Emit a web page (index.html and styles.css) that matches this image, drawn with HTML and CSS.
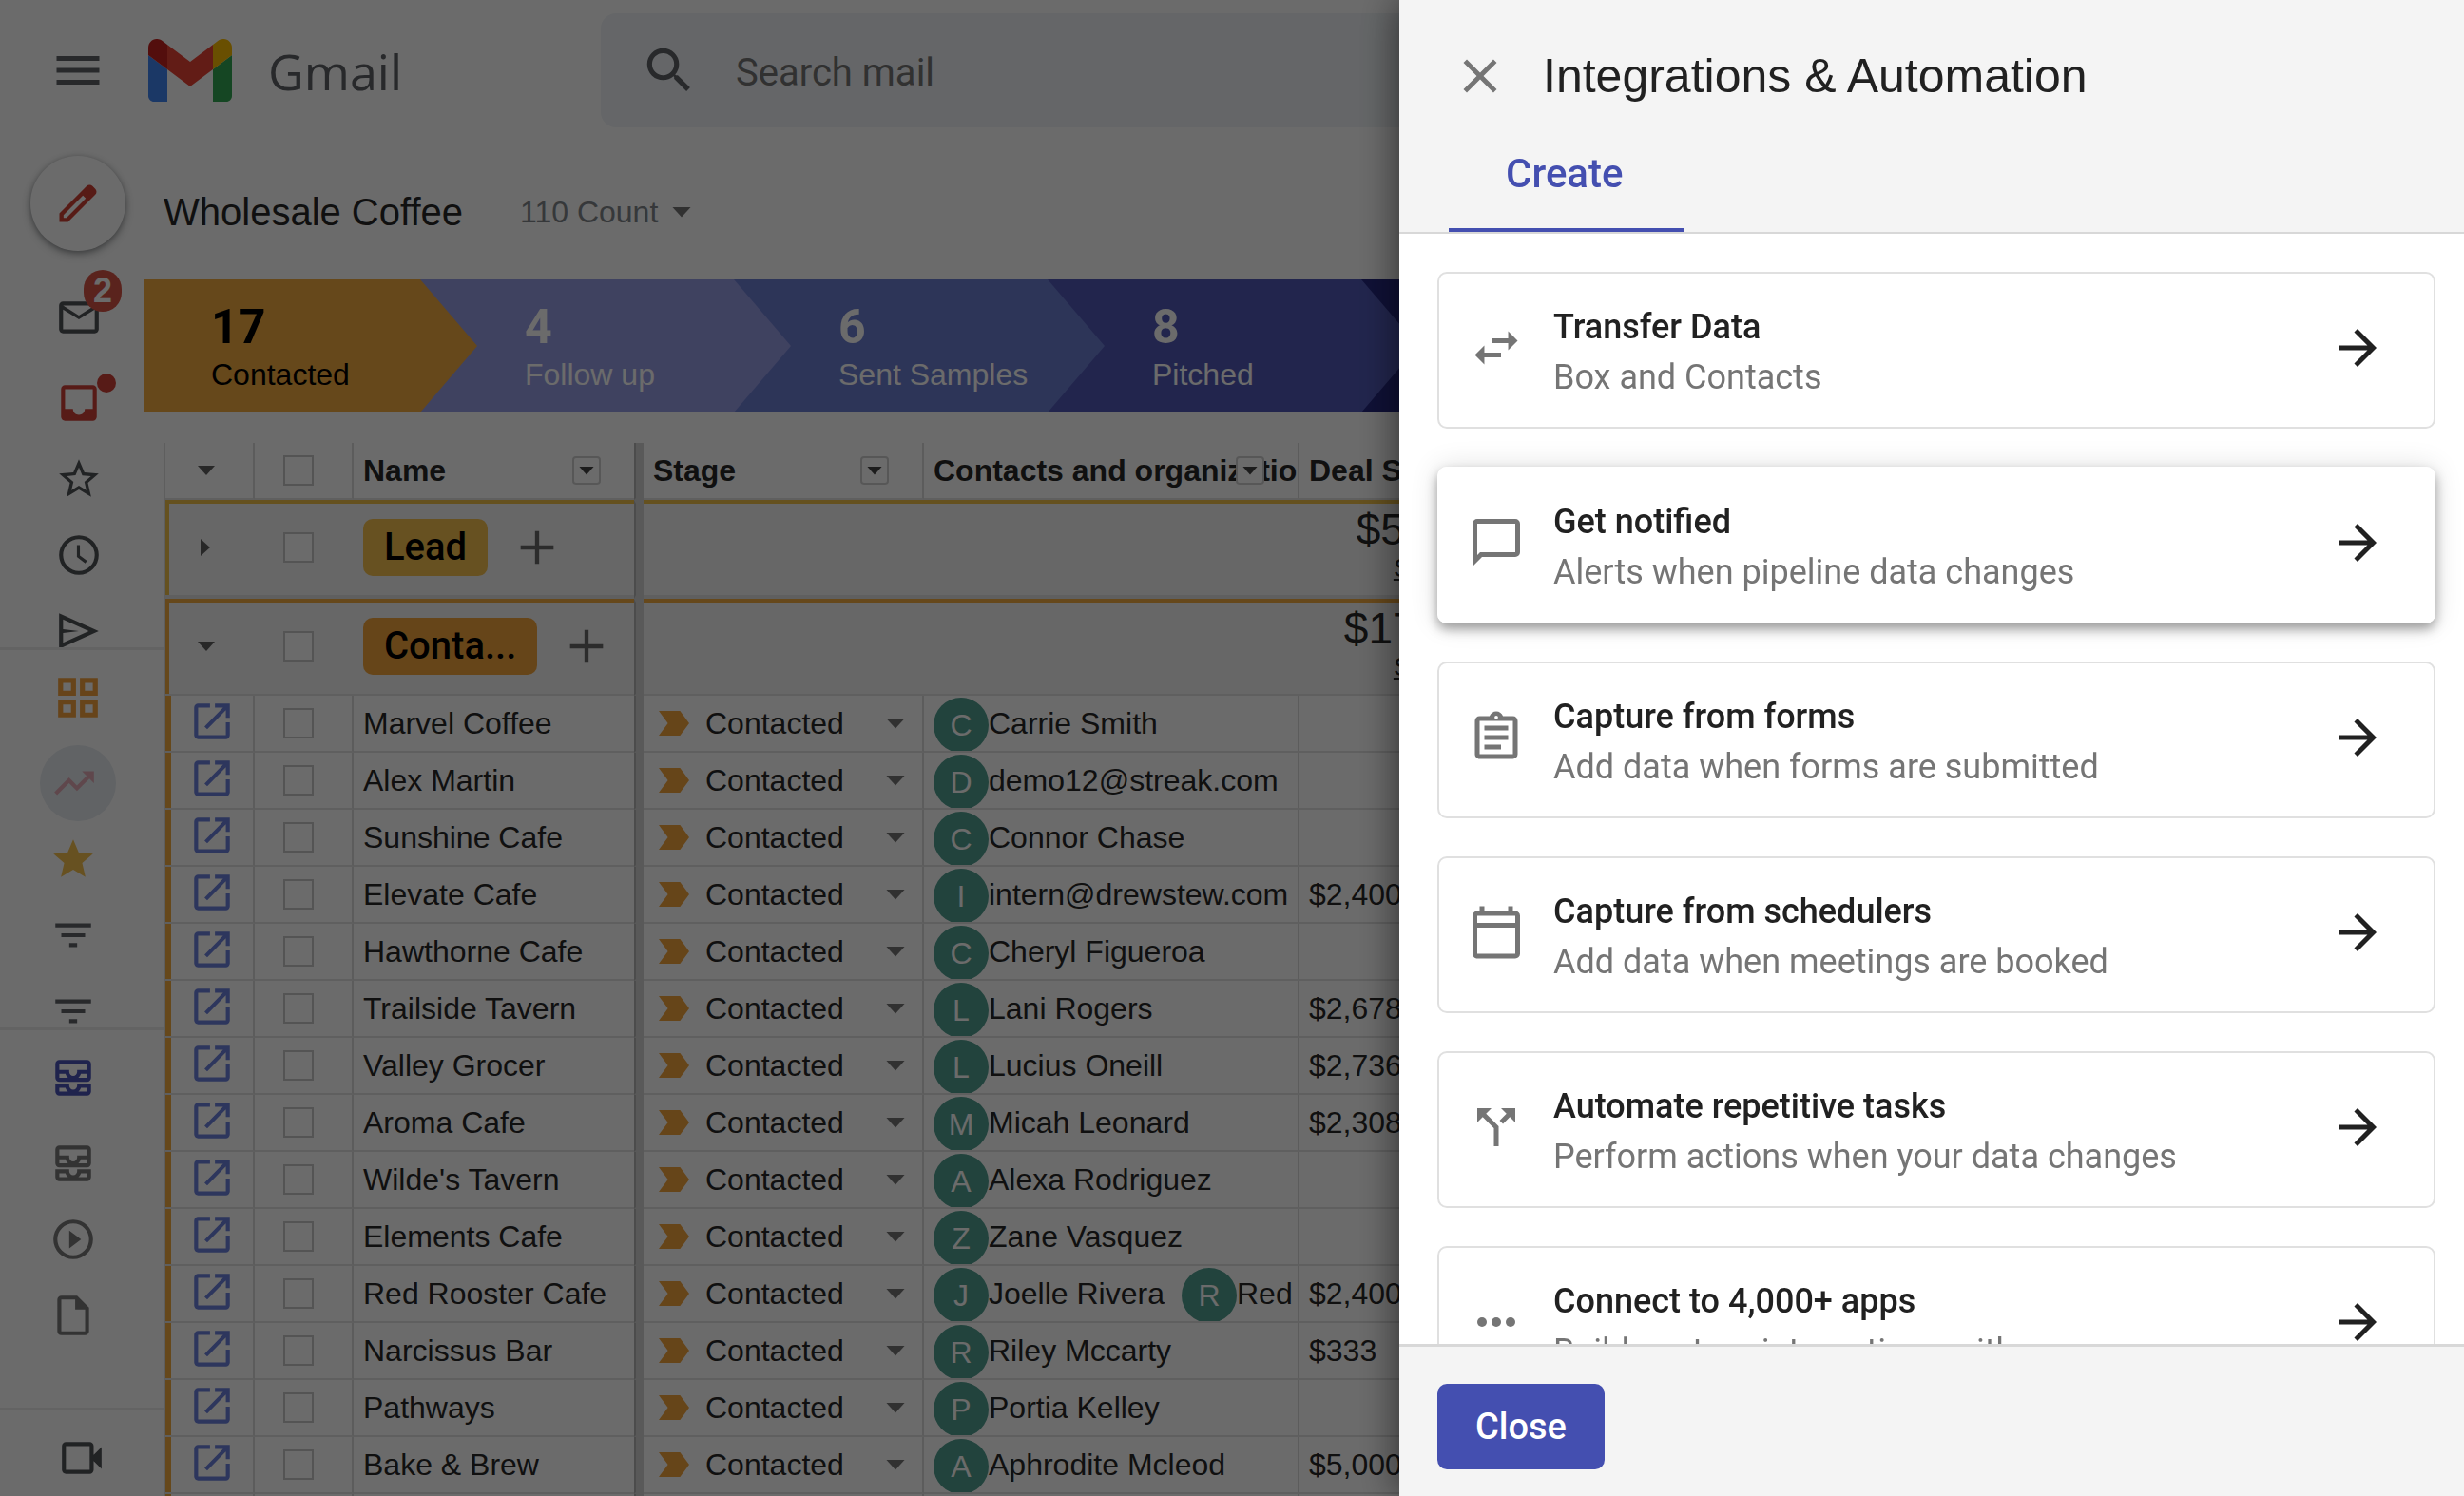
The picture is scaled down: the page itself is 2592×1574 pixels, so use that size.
FILE: index.html
```html
<!DOCTYPE html>
<html lang="en">
<head>
    <meta charset="UTF-8">
    <meta name="viewport" content="width=device-width, initial-scale=1.0">
    <title>Wholesale Coffee - Gmail</title>
    <link rel="stylesheet" href="styles.css">
</head>
<body>

<svg class="sprite" aria-hidden="true">
    <symbol id="i-menu" viewBox="0 0 24 24"><path d="M3 18h18v-2H3v2zm0-5h18v-2H3v2zm0-7v2h18V6H3z"/></symbol>
    <symbol id="i-search" viewBox="0 0 24 24"><path d="M15.5 14h-.79l-.28-.27A6.47 6.47 0 0 0 16 9.5 6.5 6.5 0 1 0 9.5 16c1.61 0 3.09-.59 4.23-1.57l.27.28v.79l5 4.99L20.49 19l-4.99-5zm-6 0a4.5 4.5 0 1 1 0-9 4.5 4.5 0 0 1 0 9z"/></symbol>
    <symbol id="i-pencil" viewBox="0 0 24 24"><path fill-rule="evenodd" d="M20.41 4.94l-1.35-1.35a2 2 0 0 0-2.82 0L3 16.82V21h4.18L20.41 7.77a2 2 0 0 0 0-2.83zM6.4 19H5v-1.4L14.4 8.2l1.4 1.4L6.4 19z"/></symbol>
    <symbol id="i-mail" viewBox="0 0 24 24"><path d="M20 4H4c-1.1 0-2 .9-2 2v12c0 1.1.9 2 2 2h16c1.1 0 2-.9 2-2V6c0-1.1-.9-2-2-2zm0 14H4V8l8 5 8-5v10zm-8-7L4 6h16l-8 5z"/></symbol>
    <symbol id="i-inbox" viewBox="0 0 24 24"><path d="M19 3H5a2 2 0 0 0-2 2v14c0 1.1.9 2 2 2h14a2 2 0 0 0 2-2V5a2 2 0 0 0-2-2zm0 12h-4c0 1.66-1.35 3-3 3s-3-1.34-3-3H5V5h14v10z"/></symbol>
    <symbol id="i-star" viewBox="0 0 24 24"><path d="M22 9.24l-7.19-.62L12 2 9.19 8.63 2 9.24l5.46 4.73L5.82 21 12 17.27 18.18 21l-1.63-7.03L22 9.24zM12 15.4l-3.76 2.27 1-4.28-3.32-2.88 4.38-.38L12 6.1l1.71 4.04 4.38.38-3.32 2.88 1 4.28L12 15.4z"/></symbol>
    <symbol id="i-star-full" viewBox="0 0 24 24"><path d="M12 17.27L18.18 21l-1.64-7.03L22 9.24l-7.19-.61L12 2 9.19 8.63 2 9.24l5.46 4.73L5.82 21z"/></symbol>
    <symbol id="i-clock" viewBox="0 0 24 24"><path d="M12 2a10 10 0 1 0 0 20 10 10 0 0 0 0-20zm0 18a8 8 0 1 1 0-16 8 8 0 0 1 0 16zm.5-13H11v6l4.2 3.2.9-1.3-3.6-2.7V7z"/></symbol>
    <symbol id="i-send" viewBox="0 0 24 24"><path d="M2 3v18l20-9L2 3zm2 8V6.1L17 12 4 17.9V13l8-1-8-1z"/></symbol>
    <symbol id="i-grid" viewBox="0 0 24 24"><path fill-rule="evenodd" d="M2 2h9v9H2V2zm2.500 2.500v4h4v-4h-4zM13 2h9v9h-9V2zm2.500 2.500v4h4v-4h-4zM2 13h9v9H2v-9zm2.500 2.500v4h4v-4h-4zM13 13h9v9h-9v-9zm2.500 2.500v4h4v-4h-4z"/></symbol>
    <symbol id="i-trend" viewBox="0 0 24 24"><path d="M16 6l2.290 2.290-4.880 4.880-4-4L2 16.590 3.410 18l6-6 4 4 6.300-6.290L22 12V6z"/></symbol>
    <symbol id="i-filter" viewBox="0 0 24 24"><path d="M10 18h4v-2h-4v2zM3 6v2h18V6H3zm3 7h12v-2H6v2z"/></symbol>
    <symbol id="i-trays" viewBox="0 0 24 24"><path fill-rule="evenodd" d="M19 3H5a2 2 0 0 0-2 2v7a2 2 0 0 0 2 2h14a2 2 0 0 0 2-2V5a2 2 0 0 0-2-2zM5 12v-2h3.130c.21.78.67 1.470 1.270 2H5zm14 0h-4.400c.6-.53 1.060-1.220 1.270-2H19v2zm0-4h-5v1a2 2 0 0 1-4 0V8H5V5h14v3zM3 15v4a2 2 0 0 0 2 2h14a2 2 0 0 0 2-2v-4h-7v1a2 2 0 0 1-4 0v-1H3zm2 4v-2h3.130c.21.78.67 1.470 1.270 2H5zm14 0h-4.400c.6-.53 1.060-1.220 1.270-2H19v2z"/></symbol>
    <symbol id="i-play" viewBox="0 0 24 24"><path d="M10 16.500l6-4.500-6-4.500v9zM12 2a10 10 0 1 0 0 20 10 10 0 0 0 0-20zm0 18a8 8 0 1 1 0-16 8 8 0 0 1 0 16z"/></symbol>
    <symbol id="i-file" viewBox="0 0 24 24"><path d="M14 2H6a2 2 0 0 0-2 2v16c0 1.100.9 2 2 2h12a2 2 0 0 0 2-2V8l-6-6zM6 20V4h7v5h5v11H6z"/></symbol>
    <symbol id="i-video" viewBox="0 0 24 24"><path d="M18 10.480V6a2 2 0 0 0-2-2H4a2 2 0 0 0-2 2v12c0 1.100.9 2 2 2h12a2 2 0 0 0 2-2v-4.480l4 3.980v-11l-4 3.980zM16 18H4V6h12v12z"/></symbol>
    <symbol id="i-open" viewBox="0 0 24 24"><path d="M19 19H5V5h6V3H5a2 2 0 0 0-2 2v14c0 1.100.9 2 2 2h14a2 2 0 0 0 2-2v-6.500h-2V19zM13.500 3v2h4.100L8.200 14.600 9.600 16 19 6.400v3.800h2V3h-7.500z"/></symbol>
    <symbol id="i-plus" viewBox="0 0 24 24"><path d="M20 13h-7v7h-2v-7H4v-2h7V4h2v7h7v2z"/></symbol>
    <symbol id="i-close" viewBox="0 0 24 24"><path d="M19 6.410L17.590 5 12 10.590 6.410 5 5 6.410 10.590 12 5 17.590 6.410 19 12 13.410 17.590 19 19 17.590 13.410 12z"/></symbol>
    <symbol id="i-arrow" viewBox="0 0 24 24"><path d="M12 4l-1.410 1.410L16.170 11H4v2h12.170l-5.580 5.590L12 20l8-8z"/></symbol>
    <symbol id="i-transfer" viewBox="0 0 24 24"><path d="M6.990 11L3 15l3.990 4v-3H14v-2H6.990v-3zM21 9l-3.990-4v3H10v2h7.010v3L21 9z"/></symbol>
    <symbol id="i-chat" viewBox="0 0 24 24"><path d="M20 2H4a2 2 0 0 0-2 2v18l4-4h14a2 2 0 0 0 2-2V4a2 2 0 0 0-2-2zm0 14H5.200L4 17.200V4h16v12z"/></symbol>
    <symbol id="i-form" viewBox="0 0 24 24"><path d="M7 15h7v2H7zm0-4h10v2H7zm0-4h10v2H7zm12-4h-4.180C14.400 1.840 13.300 1 12 1s-2.400.84-2.820 2H5a2 2 0 0 0-2 2v14c0 1.100.9 2 2 2h14a2 2 0 0 0 2-2V5a2 2 0 0 0-2-2zm-7-.25a.75.75 0 1 1 0 1.500.75.75 0 0 1 0-1.500zM19 19H5V5h14v14z"/></symbol>
    <symbol id="i-calendar" viewBox="0 0 24 24"><path d="M20 3h-1V1h-2v2H7V1H5v2H4a2 2 0 0 0-2 2v16c0 1.100.9 2 2 2h16a2 2 0 0 0 2-2V5a2 2 0 0 0-2-2zm0 18H4V10h16v11zm0-13H4V5h16v3z"/></symbol>
    <symbol id="i-split" viewBox="0 0 24 24"><path d="M14 4l2.290 2.290-2.880 2.880 1.420 1.420 2.880-2.880L20 10V4zM10 4H4v6l2.290-2.290 4.710 4.700V20h2v-8.410l-5.290-5.300z"/></symbol>
    <symbol id="i-dots" viewBox="0 0 24 24"><circle cx="6" cy="12" r="2"/><circle cx="12" cy="12" r="2"/><circle cx="18" cy="12" r="2"/></symbol>
</svg>

<div class="app">
    <header class="topbar">
        <button class="icon-btn menu-btn" aria-label="Main menu"><svg><use href="#i-menu"/></svg></button>
        <a class="logo" href="#">
            <svg viewBox="52 42 88 66" aria-hidden="true">
                <path fill="#4285f4" d="M58 108h14V74L52 59v43c0 3.320 2.690 6 6 6"/>
                <path fill="#34a853" d="M120 108h14c3.320 0 6-2.690 6-6V59l-20 15"/>
                <path fill="#fbbc04" d="M120 48v26l20-15v-8c0-7.420-8.470-11.650-14.400-7.200"/>
                <path fill="#ea4335" d="M72 74V48l24 18 24-18v26L96 92"/>
                <path fill="#c5221f" d="M52 51v8l20 15V48l-5.600-4.200c-5.940-4.450-14.400-.22-14.400 7.200"/>
            </svg>
            <span>Gmail</span>
        </a>
        <form class="search">
            <svg><use href="#i-search"/></svg>
            <input type="text" placeholder="Search mail" aria-label="Search mail">
        </form>
    </header>

    <div class="body">
        <nav class="sidebar">
            <button class="compose" aria-label="Compose"><svg><use href="#i-pencil"/></svg></button>
            <div class="group group-mail">
                <a href="#" class="tall" aria-label="Inbox"><svg><use href="#i-mail"/></svg><span class="badge">2</span></a>
                <a href="#" class="red" aria-label="Important"><svg><use href="#i-inbox"/></svg><span class="dot"></span></a>
                <a href="#" aria-label="Starred"><svg><use href="#i-star"/></svg></a>
                <a href="#" aria-label="Snoozed"><svg><use href="#i-clock"/></svg></a>
                <a href="#" aria-label="Sent"><svg><use href="#i-send"/></svg></a>
            </div>
            <div class="group group-pipes">
                <a href="#" class="tall orange" aria-label="Pipelines"><svg><use href="#i-grid"/></svg></a>
                <a href="#" class="pink" aria-label="Wholesale Coffee"><span class="current"><svg><use href="#i-trend"/></svg></span></a>
                <a href="#" class="gold" aria-label="Favorites"><svg><use href="#i-star-full"/></svg></a>
                <a href="#" aria-label="Saved view"><svg><use href="#i-filter"/></svg></a>
                <a href="#" aria-label="Saved view"><svg><use href="#i-filter"/></svg></a>
            </div>
            <div class="group group-tools">
                <a href="#" class="tall blue" aria-label="Boxes"><svg><use href="#i-trays"/></svg></a>
                <a href="#" aria-label="All boxes"><svg><use href="#i-trays"/></svg></a>
                <a href="#" aria-label="Sequences"><svg><use href="#i-play"/></svg></a>
                <a href="#" aria-label="Snippets"><svg><use href="#i-file"/></svg></a>
            </div>
            <div class="group group-meet">
                <a href="#" class="tall" aria-label="Meet"><svg><use href="#i-video"/></svg></a>
            </div>
        </nav>

        <main class="main">
            <div class="title-row">
                <h1>Wholesale Coffee</h1>
                <span class="pick pick-count">
                    <select aria-label="Count"><option>110 Count</option></select>
                </span>
            </div>

            <ol class="pipeline">
                <li class="s1"><b>17</b><span>Contacted</span></li>
                <li class="s2"><b>4</b><span>Follow up</span></li>
                <li class="s3"><b>6</b><span>Sent Samples</span></li>
                <li class="s4"><b>8</b><span>Pitched</span></li>
                <li class="s5"></li>
            </ol>

            <table class="sheet">
                <colgroup>
                    <col class="c-open"><col class="c-check"><col class="c-name"><col class="c-bar"><col class="c-stage"><col class="c-contact"><col class="c-deal"><col>
                </colgroup>
                <thead>
                    <tr>
                        <th><span class="tri-down"></span></th>
                        <th><input type="checkbox" aria-label="Select all"></th>
                        <th><div class="head">Name<button class="filter" aria-label="Name menu"></button></div></th>
                        <th class="bar"></th>
                        <th><div class="head">Stage<button class="filter" aria-label="Stage menu"></button></div></th>
                        <th><div class="head">Contacts and organizations<button class="filter" aria-label="Contacts menu"></button></div></th>
                        <th><div class="head">Deal Size</div></th>
                        <th></th>
                    </tr>
                </thead>
                <tbody id="rows">
                    <tr class="grp lead">
                        <td><span class="tri-right"></span></td>
                        <td><input type="checkbox" aria-label="Select Lead"></td>
                        <td><div class="grp-name"><span class="pill">Lead</span><button class="add" aria-label="Add to Lead"><svg><use href="#i-plus"/></svg></button></div></td>
                        <td class="bar"></td>
                        <td></td>
                        <td></td>
                        <td class="sum">$5,000<a href="#">SUM</a></td>
                        <td></td>
                    </tr>
                    <tr class="grp contacted">
                        <td><span class="tri-down"></span></td>
                        <td><input type="checkbox" aria-label="Select Contacted"></td>
                        <td><div class="grp-name"><span class="pill">Conta...</span><button class="add" aria-label="Add to Contacted"><svg><use href="#i-plus"/></svg></button></div></td>
                        <td class="bar"></td>
                        <td></td>
                        <td></td>
                        <td class="sum">$17,000<a href="#">SUM</a></td>
                        <td></td>
                    </tr>
                </tbody>
            </table>
        </main>
    </div>
</div>

<div class="overlay"></div>

<aside class="drawer">
    <header class="drawer-head">
        <div class="drawer-title">
            <button class="icon-btn" aria-label="Close panel"><svg><use href="#i-close"/></svg></button>
            <h2>Integrations &amp; Automation</h2>
        </div>
        <nav class="tabs"><a href="#" class="active">Create</a></nav>
    </header>

    <div class="cards">
        <a class="card" href="#">
            <svg class="lead-icon"><use href="#i-transfer"/></svg>
            <div class="card-text"><h3>Transfer Data</h3><p>Box and Contacts</p></div>
            <svg class="go"><use href="#i-arrow"/></svg>
        </a>
        <a class="card raised" href="#">
            <svg class="lead-icon"><use href="#i-chat"/></svg>
            <div class="card-text"><h3>Get notified</h3><p>Alerts when pipeline data changes</p></div>
            <svg class="go"><use href="#i-arrow"/></svg>
        </a>
        <a class="card" href="#">
            <svg class="lead-icon"><use href="#i-form"/></svg>
            <div class="card-text"><h3>Capture from forms</h3><p>Add data when forms are submitted</p></div>
            <svg class="go"><use href="#i-arrow"/></svg>
        </a>
        <a class="card" href="#">
            <svg class="lead-icon"><use href="#i-calendar"/></svg>
            <div class="card-text"><h3>Capture from schedulers</h3><p>Add data when meetings are booked</p></div>
            <svg class="go"><use href="#i-arrow"/></svg>
        </a>
        <a class="card" href="#">
            <svg class="lead-icon"><use href="#i-split"/></svg>
            <div class="card-text"><h3>Automate repetitive tasks</h3><p>Perform actions when your data changes</p></div>
            <svg class="go"><use href="#i-arrow"/></svg>
        </a>
        <a class="card" href="#">
            <svg class="lead-icon"><use href="#i-dots"/></svg>
            <div class="card-text"><h3>Connect to 4,000+ apps</h3><p>Build custom integrations with</p></div>
            <svg class="go"><use href="#i-arrow"/></svg>
        </a>
    </div>

    <footer class="drawer-foot">
        <button class="close-btn">Close</button>
    </footer>
</aside>

<script src="script.js"></script>
</body>
</html>
```

FILE: styles.css
```css
* {
    box-sizing: border-box;
}
html {
    overflow: hidden;
}
body {
    margin: 0;
    height: 100vh;
    overflow: hidden;
    font-family: "Liberation Sans", Arial, sans-serif;
    font-size: 32px;
    color: #282828;
    background-color: white;
}
h1, h2, h3, p, ol {
    margin: 0;
    padding: 0;
    font-weight: normal;
}
a {
    color: inherit;
    text-decoration: none;
}
button, input, select {
    font: inherit;
    color: inherit;
    margin: 0;
    padding: 0;
    border: 0;
    background: none;
}
svg {
    display: block;
    flex: none;
    fill: currentColor;
}
.sprite {
    display: none;
}
.icon-btn svg {
    width: 60px;
    height: 60px;
}
.app {
    height: 100vh;
    overflow: hidden;
    display: flex;
    flex-direction: column;
}

/* Top bar */
.topbar {
    height: 148px;
    flex: none;
    display: flex;
    align-items: center;
    color: #5f6368;
}
.menu-btn {
    margin-left: 51px;
}
.menu-btn svg {
    width: 62px;
    height: 60px;
}
.logo {
    width: 475px;
    margin-left: 43px;
    margin-right: 1px;
    display: flex;
    align-items: center;
    gap: 38px;
    font-family: "Open Sans", sans-serif;
    font-size: 52px;
}
.logo svg {
    width: 88px;
    height: 66px;
}
.search {
    flex: 1;
    height: 120px;
    padding-left: 41px;
    display: flex;
    align-items: center;
    gap: 39px;
    background-color: #f0f4f7;
    border-radius: 16px;
}
.search svg {
    width: 62px;
    height: 62px;
}
.search input {
    flex: 1;
    padding-top: 4px;
    font-family: Roboto, sans-serif;
    font-size: 40px;
}
.search input::placeholder {
    color: #757575;
    opacity: 1;
}
.body {
    flex: 1;
    min-height: 0;
    display: flex;
}

/* Left rail */
.sidebar {
    width: 152px;
    flex: none;
    display: flex;
    flex-direction: column;
    color: #5f6368;
}
.compose {
    width: 100px;
    height: 100px;
    margin: 16px 0 20px 32px;
    flex: none;
    display: flex;
    align-items: center;
    justify-content: center;
    border-radius: 50%;
    color: #d04035;
    background-color: white;
    box-shadow: 0 2px 6px rgba(60, 64, 67, 0.5), 0 4px 12px rgba(60, 64, 67, 0.2);
}
.compose svg {
    width: 52px;
    height: 52px;
}
.group {
    width: 172px;
    height: 400px;
    flex: none;
    overflow: hidden;
    border-bottom: 3px solid #ebebeb;
}
.group a {
    height: 80px;
    padding-right: 18px;
    display: flex;
    align-items: center;
    justify-content: center;
    position: relative;
}
.group a.tall {
    height: 100px;
}
.group svg {
    width: 50px;
    height: 50px;
}
.group-mail a, .group-meet a {
    padding-right: 6px;
    color: #505357;
}
.group-meet {
    height: auto;
    flex: 1;
    border: 0;
}
.group-meet a {
    padding-right: 0;
}
.group-tools a {
    color: #7a7a7a;
}
.group-pipes .tall {
    padding-right: 8px;
}
.group-pipes .pink {
    padding-right: 8px;
}
.group .red {
    color: #cf4238;
}
.group .orange {
    color: #f5a23f;
}
.group .gold {
    color: #f5c14f;
}
.group .pink {
    color: #e3aab6;
}
.group .blue {
    color: #4a53b8;
}
.current {
    width: 80px;
    height: 80px;
    padding-right: 8px;
    display: flex;
    align-items: center;
    justify-content: center;
    border-radius: 50%;
    background-color: #e6ebf0;
}
.badge {
    position: absolute;
    left: 88px;
    top: 0;
    width: 40px;
    height: 44px;
    border-radius: 22px;
    font-size: 36px;
    font-weight: bold;
    line-height: 44px;
    text-align: center;
    color: white;
    background-color: #d65547;
}
.dot {
    position: absolute;
    left: 102px;
    top: 9px;
    width: 20px;
    height: 20px;
    border-radius: 50%;
    background-color: #cf4238;
}

/* Pipeline page */
.main {
    flex: 1;
    min-width: 0;
    overflow: hidden;
}
.title-row {
    height: 146px;
    padding: 4px 0 0 20px;
    display: flex;
    align-items: center;
    gap: 60px;
}
.title-row h1 {
    font-size: 40px;
}
.pick {
    display: flex;
    align-items: center;
}
.pick select {
    appearance: none;
    outline: 0;
}
.pick::after {
    content: "";
    width: 20px;
    height: 11px;
    clip-path: polygon(0 0, 100% 0, 50% 100%);
    background-color: #757575;
}
.pick-count {
    gap: 14px;
    color: #80868b;
}
.pipeline {
    height: 140px;
    display: flex;
    list-style: none;
    color: white;
    overflow: hidden;
}
.pipeline li {
    width: 390px;
    margin-left: -60px;
    padding-left: 110px;
    padding-top: 4px;
    flex: none;
    display: flex;
    flex-direction: column;
    justify-content: center;
    position: relative;
    clip-path: polygon(0 0, 330px 0, 100% 50%, 330px 100%, 0 100%);
}
.pipeline li.s1 {
    margin-left: -100px;
    padding-left: 170px;
    width: 450px;
    z-index: 5;
    color: black;
    background-color: #f4ab40;
    clip-path: polygon(0 0, 390px 0, 100% 50%, 390px 100%, 0 100%);
}
.pipeline .s2 {
    z-index: 4;
    background-color: #979de5;
}
.pipeline .s3 {
    z-index: 3;
    background-color: #6d7ed2;
}
.pipeline .s4 {
    z-index: 2;
    background-color: #515ab8;
}
.pipeline .s5 {
    z-index: 1;
    background-color: #252880;
}
.pipeline b {
    font-family: Roboto, sans-serif;
    font-size: 50px;
    line-height: 56px;
}
.pipeline span {
    line-height: 44px;
}

/* Sheet */
.sheet {
    width: calc(100% - 20px);
    margin: 32px 0 0 20px;
    table-layout: fixed;
    border-collapse: separate;
    border-spacing: 0;
    border-left: 2px solid #e0e0e0;
}
.c-open {
    width: 94px;
}
.c-check {
    width: 104px;
}
.c-name {
    width: 295px;
}
.c-bar {
    width: 10px;
}
.c-stage {
    width: 295px;
}
.c-contact {
    width: 395px;
}
.c-deal {
    width: 260px;
}
.sheet th, .sheet td {
    height: 60px;
    padding: 0 0 0 10px;
    text-align: left;
    white-space: nowrap;
    border-right: 2px solid #dcdcdc;
    border-bottom: 2px solid #e2e2e2;
}
.sheet .bar {
    padding: 0;
    border-right: 0;
    border-left: 2px solid #b5b5b5;
    border-bottom-color: #d4d4d4;
    background-color: #d4d4d4;
}
.sheet th:nth-child(3), .sheet td:nth-child(3) {
    border-right: 0;
}
.sheet input {
    display: block;
    appearance: none;
    width: 32px;
    height: 32px;
    margin-left: 20px;
    border: 2px solid #c8c8c8;
    background-color: white;
}
.head {
    height: 58px;
    display: flex;
    align-items: center;
    position: relative;
    overflow: hidden;
}
.filter {
    position: absolute;
    right: 35px;
    top: 14px;
    width: 30px;
    height: 30px;
    display: flex;
    align-items: center;
    justify-content: center;
    border: 2px solid #d0d0d0;
    border-radius: 4px;
    background-color: white;
}
.filter::after {
    content: "";
    width: 16px;
    height: 9px;
    clip-path: polygon(0 0, 100% 0, 50% 100%);
    background-color: #444;
}
.tri-down, .tri-right {
    display: block;
    width: 18px;
    height: 10px;
    margin-left: 24px;
    clip-path: polygon(0 0, 100% 0, 50% 100%);
    background-color: #606060;
}
.tri-right {
    width: 10px;
    height: 18px;
    margin-left: 27px;
    clip-path: polygon(0 0, 100% 50%, 0 100%);
}
.sheet .grp td {
    height: 102px;
    padding-bottom: 4px;
    border-right: 0;
    border-top: 4px solid;
    background-color: #f5f5f5;
}
.sheet .grp td.bar {
    border-top-color: #d4d4d4;
    border-bottom-color: #d4d4d4;
    background-color: #d4d4d4;
}
.sheet .lead td {
    height: 104px;
    border-top-color: #f0c14a;
    border-bottom-width: 4px;
}
.sheet .lead td:first-child {
    box-shadow: inset 4px 0 #f0c14a;
}
.sheet .contacted td {
    border-top-color: #f4ab40;
}
.sheet .contacted td:first-child {
    box-shadow: inset 4px 0 #f4ab40;
}
.grp-name {
    display: flex;
    align-items: center;
    gap: 26px;
}
.pill {
    height: 60px;
    padding: 0 22px;
    border-radius: 10px;
    font-family: Roboto, sans-serif;
    font-weight: 500;
    font-size: 40px;
    line-height: 60px;
    color: black;
    background-color: #f5c14f;
}
.contacted .pill {
    background-color: #f4a53d;
}
.add svg {
    width: 52px;
    height: 52px;
    color: #6a6a6a;
}
.sheet .grp .sum {
    padding: 0;
    vertical-align: top;
    text-align: center;
    font-size: 46px;
    line-height: 54px;
}
.sum a {
    display: block;
    font-size: 28px;
    line-height: 28px;
    text-decoration: underline;
}
.row td:first-child {
    padding: 0;
}
.open {
    height: 58px;
    padding: 0 0 4px 18px;
    display: flex;
    align-items: center;
    color: #6c80dd;
    border-left: 6px solid #f4ab40;
}
.open svg {
    width: 50px;
    height: 50px;
}
.stage {
    display: flex;
    align-items: center;
    justify-content: space-between;
    padding: 0 18px 0 6px;
}
.stage i {
    width: 32px;
    height: 26px;
    clip-path: polygon(0 0, 70% 0, 100% 50%, 70% 100%, 0 100%, 30% 50%);
    background-color: #f4a53d;
}
.stage .pick {
    width: 210px;
    justify-content: space-between;
}
.people {
    height: 58px;
    display: flex;
    align-items: center;
    overflow: hidden;
}
.avatar {
    width: 58px;
    height: 58px;
    flex: none;
    align-self: flex-start;
    margin-top: 2px;
    border-radius: 50%;
    line-height: 58px;
    text-align: center;
    color: white;
    background-color: #519f91;
}
.person {
    padding-right: 18px;
}

/* Drawer */
.overlay {
    position: fixed;
    inset: 0;
    z-index: 10;
    background-color: rgba(0, 0, 0, 0.58);
}
.drawer {
    position: fixed;
    top: 0;
    right: 0;
    bottom: 0;
    z-index: 11;
    width: 1120px;
    max-width: 100%;
    display: flex;
    flex-direction: column;
    color: #212121;
    background-color: white;
    box-shadow: 0 0 40px rgba(0, 0, 0, 0.6);
}
.drawer-head {
    flex: none;
    background-color: #f4f4f4;
    border-bottom: 2px solid #d8d8d8;
}
.drawer-title {
    height: 160px;
    padding-left: 55px;
    display: flex;
    align-items: center;
    gap: 36px;
}
.drawer-title svg {
    color: #757575;
}
.drawer-title h2 {
    font-size: 50px;
}
.tabs {
    display: flex;
    padding-left: 52px;
}
.tabs a {
    width: 248px;
    height: 84px;
    padding-left: 60px;
    font-family: Roboto, sans-serif;
    font-weight: 500;
    font-size: 42px;
    line-height: 46px;
    color: #444fb0;
    border-bottom: 4px solid #444fb0;
}
.cards {
    flex: 1;
    min-height: 0;
    overflow: hidden;
    padding: 40px 30px 40px 40px;
    display: flex;
    flex-direction: column;
    gap: 40px;
}
.card {
    height: 165px;
    padding: 0 50px 0 30px;
    flex: none;
    display: flex;
    align-items: center;
    gap: 30px;
    border: 2px solid #e0e0e0;
    border-radius: 10px;
}
.card.raised {
    border-color: white;
    box-shadow: 0 6px 12px rgba(0, 0, 0, 0.35), 0 0 30px rgba(0, 0, 0, 0.12);
}
.card svg {
    width: 60px;
    height: 60px;
    margin-bottom: 6px;
}
.lead-icon {
    color: #757575;
}
.card-text {
    flex: 1;
    padding-top: 4px;
}
.card h3 {
    font-family: Roboto, sans-serif;
    font-weight: 500;
    font-size: 36px;
    line-height: 53px;
}
.card p {
    font-family: Roboto, sans-serif;
    font-size: 36px;
    line-height: 53px;
    color: #757575;
}
.drawer-foot {
    height: 160px;
    padding: 39px 40px;
    flex: none;
    background-color: #f4f4f4;
    border-top: 3px solid #d8d8d8;
}
.close-btn {
    height: 90px;
    padding: 0 40px;
    border-radius: 10px;
    font-family: Roboto, sans-serif;
    font-weight: 500;
    font-size: 38px;
    color: white;
    background-color: #444fb0;
}
```

FILE: script.js
```javascript
var boxes = [
    ["Marvel Coffee", ["Carrie Smith"], ""],
    ["Alex Martin", ["demo12@streak.com"], ""],
    ["Sunshine Cafe", ["Connor Chase"], ""],
    ["Elevate Cafe", ["intern@drewstew.com"], "$2,400"],
    ["Hawthorne Cafe", ["Cheryl Figueroa"], ""],
    ["Trailside Tavern", ["Lani Rogers"], "$2,678"],
    ["Valley Grocer", ["Lucius Oneill"], "$2,736"],
    ["Aroma Cafe", ["Micah Leonard"], "$2,308"],
    ["Wilde's Tavern", ["Alexa Rodriguez"], ""],
    ["Elements Cafe", ["Zane Vasquez"], ""],
    ["Red Rooster Cafe", ["Joelle Rivera", "Red Rooster"], "$2,400"],
    ["Narcissus Bar", ["Riley Mccarty"], "$333"],
    ["Pathways", ["Portia Kelley"], ""],
    ["Bake & Brew", ["Aphrodite Mcleod"], "$5,000"],
    ["", [], ""]
];

function person(name) {
    return '<span class="avatar">' + name.charAt(0).toUpperCase() + '</span><span class="person">' + name + '</span>';
}

var html = "";
boxes.forEach(function(box) {
    var name = box[0].replace("&", "&amp;");
    html += '<tr class="row">' +
        '<td><a class="open" href="#" aria-label="Open ' + name + '"><svg><use href="#i-open"/></svg></a></td>' +
        '<td><input type="checkbox" aria-label="Select ' + name + '"></td>' +
        '<td>' + name + '</td>' +
        '<td class="bar"></td>' +
        '<td><div class="stage"><i></i><span class="pick"><select aria-label="Stage"><option>Contacted</option></select></span></div></td>' +
        '<td><div class="people">' + box[1].map(person).join("") + '</div></td>' +
        '<td>' + box[2] + '</td>' +
        '<td></td></tr>';
});
document.getElementById("rows").insertAdjacentHTML("beforeend", html);
```
